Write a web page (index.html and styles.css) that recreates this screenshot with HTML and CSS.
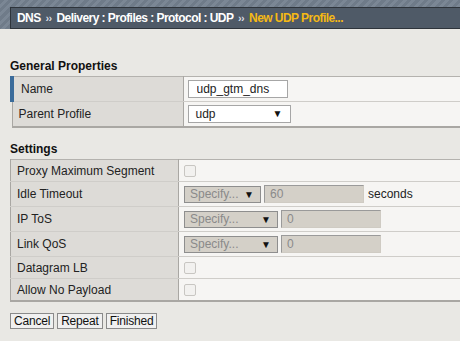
FILE: index.html
```html
<!DOCTYPE html>
<html lang="en">
<head>
<meta charset="UTF-8" />
<title>New UDP Profile</title>
<link rel="stylesheet" href="styles.css">
</head>
<body>

<div class="top">
  <div class="crumbs">DNS <span class="sep">&rsaquo;&rsaquo;</span> Delivery : Profiles : Protocol : UDP <span class="sep">&rsaquo;&rsaquo;</span> <span class="cur">New UDP Profile...</span></div>
</div>

<div class="content">
  <h2>General Properties</h2>
  <table class="props gen">
    <tr>
      <td class="label req">Name</td>
      <td class="val"><input class="txt" type="text" value="udp_gtm_dns"></td>
    </tr>
    <tr>
      <td class="label">Parent Profile</td>
      <td class="val"><div class="sel parent">udp <span class="arr">&#9660;</span></div></td>
    </tr>
  </table>

  <h2>Settings</h2>
  <table class="props set">
    <tr class="short">
      <td class="label">Proxy Maximum Segment</td>
      <td class="val"><span class="chk"></span></td>
    </tr>
    <tr>
      <td class="label">Idle Timeout</td>
      <td class="val"><div class="line"><div class="sel dis w77">Specify... <span class="arr">&#9660;</span></div><div class="txt dis">60</div><span class="unit">seconds</span></div></td>
    </tr>
    <tr>
      <td class="label">IP ToS</td>
      <td class="val"><div class="line"><div class="sel dis w94">Specify... <span class="arr">&#9660;</span></div><div class="txt dis">0</div></div></td>
    </tr>
    <tr>
      <td class="label">Link QoS</td>
      <td class="val"><div class="line"><div class="sel dis w94">Specify... <span class="arr">&#9660;</span></div><div class="txt dis">0</div></div></td>
    </tr>
    <tr class="short">
      <td class="label">Datagram LB</td>
      <td class="val"><span class="chk"></span></td>
    </tr>
    <tr class="short">
      <td class="label">Allow No Payload</td>
      <td class="val"><span class="chk"></span></td>
    </tr>
  </table>

  <div class="buttons">
    <button>Cancel</button><button>Repeat</button><button>Finished</button>
  </div>
</div>

</body>
</html>
```

FILE: styles.css
```css
body { margin: 0; background: #e9e8e4; font-family: "Liberation Sans", Arial, sans-serif; font-size: 12px; color: #222; }
.top { height: 29px; padding: 7px 0 0 10px; box-sizing: border-box; background: repeating-linear-gradient(135deg, #6f7b89 0 3px, #7b8795 3px 6px); }
.crumbs { height: 22px; box-sizing: border-box; padding: 0 0 0 6px; background: #4f5a67; border: 1px solid #2e343b; border-right: none; color: #fff; font-weight: bold; font-size: 12px; line-height: 20px; letter-spacing: -0.55px; white-space: nowrap; }
.crumbs .sep { font-size: 11px; color: #d8dde3; margin: 0 2px; }
.crumbs .cur { color: #f5b914; }
.content { padding: 30px 0 0 10px; }
h2 { margin: 0 0 3px; font-size: 12px; font-weight: bold; color: #111; }
.props { width: 100%; border-collapse: collapse; border-top: 1px solid #b4b2ae; border-bottom: 2px solid #a9a7a3; margin-bottom: 14px; }
.props td { border-bottom: 1px solid #cfcdc9; padding: 0; height: 24px; }
.props tr:last-child td { border-bottom: none; }
.props .label { background: #dddbd7; border-left: 1px solid #a9a7a3; border-right: 1px solid #a9a7a3; padding-left: 6px; box-sizing: border-box; }
.gen .label { width: 171px; }
.set .label { width: 168px; }
.props .req { border-left: 4px solid #3b6c9b; padding-left: 7px; }
.props .val { background: #f6f5f3; padding-left: 4px; }
.set .val { padding-left: 5px; }
.props tr.short td { height: 21px; }
.txt { width: 100px; height: 18px; box-sizing: border-box; border: 1px solid #a6a6a6; background: #fff; font: inherit; font-size: 12px; padding: 0 0 0 8px; color: #222; }
.sel { height: 18px; box-sizing: border-box; border: 1px solid #a6a6a6; background: #fff; padding: 0 0 0 7px; line-height: 16px; display: flex; justify-content: space-between; }
.sel .arr { font-size: 10px; padding-right: 7px; color: #111; }
.parent { width: 103px; }
.line { display: flex; align-items: center; gap: 3px; }
.sel.dis { height: 17px; background: #d4d0c8; border-color: #8e8e8e; color: #8a8a8a; padding-left: 5px; line-height: 15px; }
.sel.dis .arr { color: #111; padding-right: 6px; }
.w77 { width: 77px; }
.w94 { width: 94px; }
.txt.dis { height: 18px; background: #d4d0c8; border: 1px solid #cfcbc3; border-top-color: #9a9a9a; border-left-color: #9a9a9a; color: #8a8a8a; padding-left: 5px; line-height: 16px; }
.unit { margin-left: 1px; color: #222; }
.chk { display: block; width: 10px; height: 10px; border: 1px solid #c8c6c2; border-radius: 2px; background: #f2f1ef; }
.buttons { display: flex; gap: 3px; margin-top: -3px; }
button { font: inherit; font-size: 12px; letter-spacing: -0.2px; height: 16px; padding: 0 3px; line-height: 14px; background: #f0f0f0; border: 1px solid #8a8a8a; color: #111; margin: 0; }
```
